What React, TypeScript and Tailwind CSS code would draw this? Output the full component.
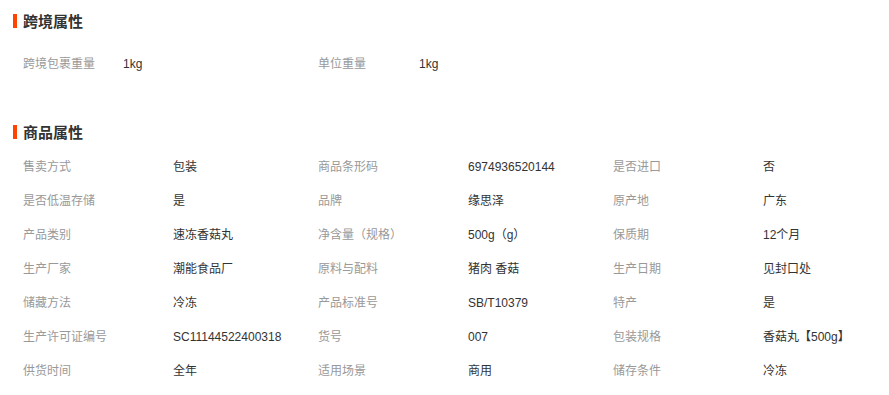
import React from "react";

const font = {
  fontFamily: "Tahoma, 'Liberation Sans', 'Noto Sans CJK SC', sans-serif",
};

const product: [string, string][] = [
  ["售卖方式", "包装"],
  ["商品条形码", "6974936520144"],
  ["是否进口", "否"],
  ["是否低温存储", "是"],
  ["品牌", "缘思泽"],
  ["原产地", "广东"],
  ["产品类别", "速冻香菇丸"],
  ["净含量（规格）", "500g（g）"],
  ["保质期", "12个月"],
  ["生产厂家", "潮能食品厂"],
  ["原料与配料", "猪肉 香菇"],
  ["生产日期", "见封口处"],
  ["储藏方法", "冷冻"],
  ["产品标准号", "SB/T10379"],
  ["特产", "是"],
  ["生产许可证编号", "SC11144522400318"],
  ["货号", "007"],
  ["包装规格", "香菇丸【500g】"],
  ["供货时间", "全年"],
  ["适用场景", "商用"],
  ["储存条件", "冷冻"],
];

function Heading({ title, h }: { title: string; h: string }) {
  return (
    <div className={`flex items-center ${h}`}>
      <span className="ml-[13px] w-[4px] h-[14px] bg-[#ff4400]" />
      <span className="ml-[6px] text-[15px] font-bold text-[#333] leading-none">{title}</span>
    </div>
  );
}

export default function App() {
  return (
    <div className="w-[889px] h-[395px] bg-white overflow-hidden" style={font}>
      <Heading title="跨境属性" h="h-[42px]" />
      <div className="flex items-center h-[42px] pt-[2px] pl-[23px] text-[12px]">
        <div className="w-[100px] text-[#999]">跨境包裹重量</div>
        <div className="w-[195px] text-[#333]">1kg</div>
        <div className="w-[101px] text-[#999]">单位重量</div>
        <div className="w-[194px] text-[#333]">1kg</div>
      </div>
      <div className="h-[31px]" />
      <Heading title="商品属性" h="h-[34px]" />
      <div className="grid grid-cols-[150px_145px_150px_145px_150px_145px] pl-[23px] text-[12px]">
        {product.map(([k, v]) => (
          <React.Fragment key={k}>
            <div className="h-[34px] pt-[2px] flex items-center text-[#999]">{k}</div>
            <div className="h-[34px] pt-[2px] flex items-center text-[#333] whitespace-nowrap">{v}</div>
          </React.Fragment>
        ))}
      </div>
    </div>
  );
}
